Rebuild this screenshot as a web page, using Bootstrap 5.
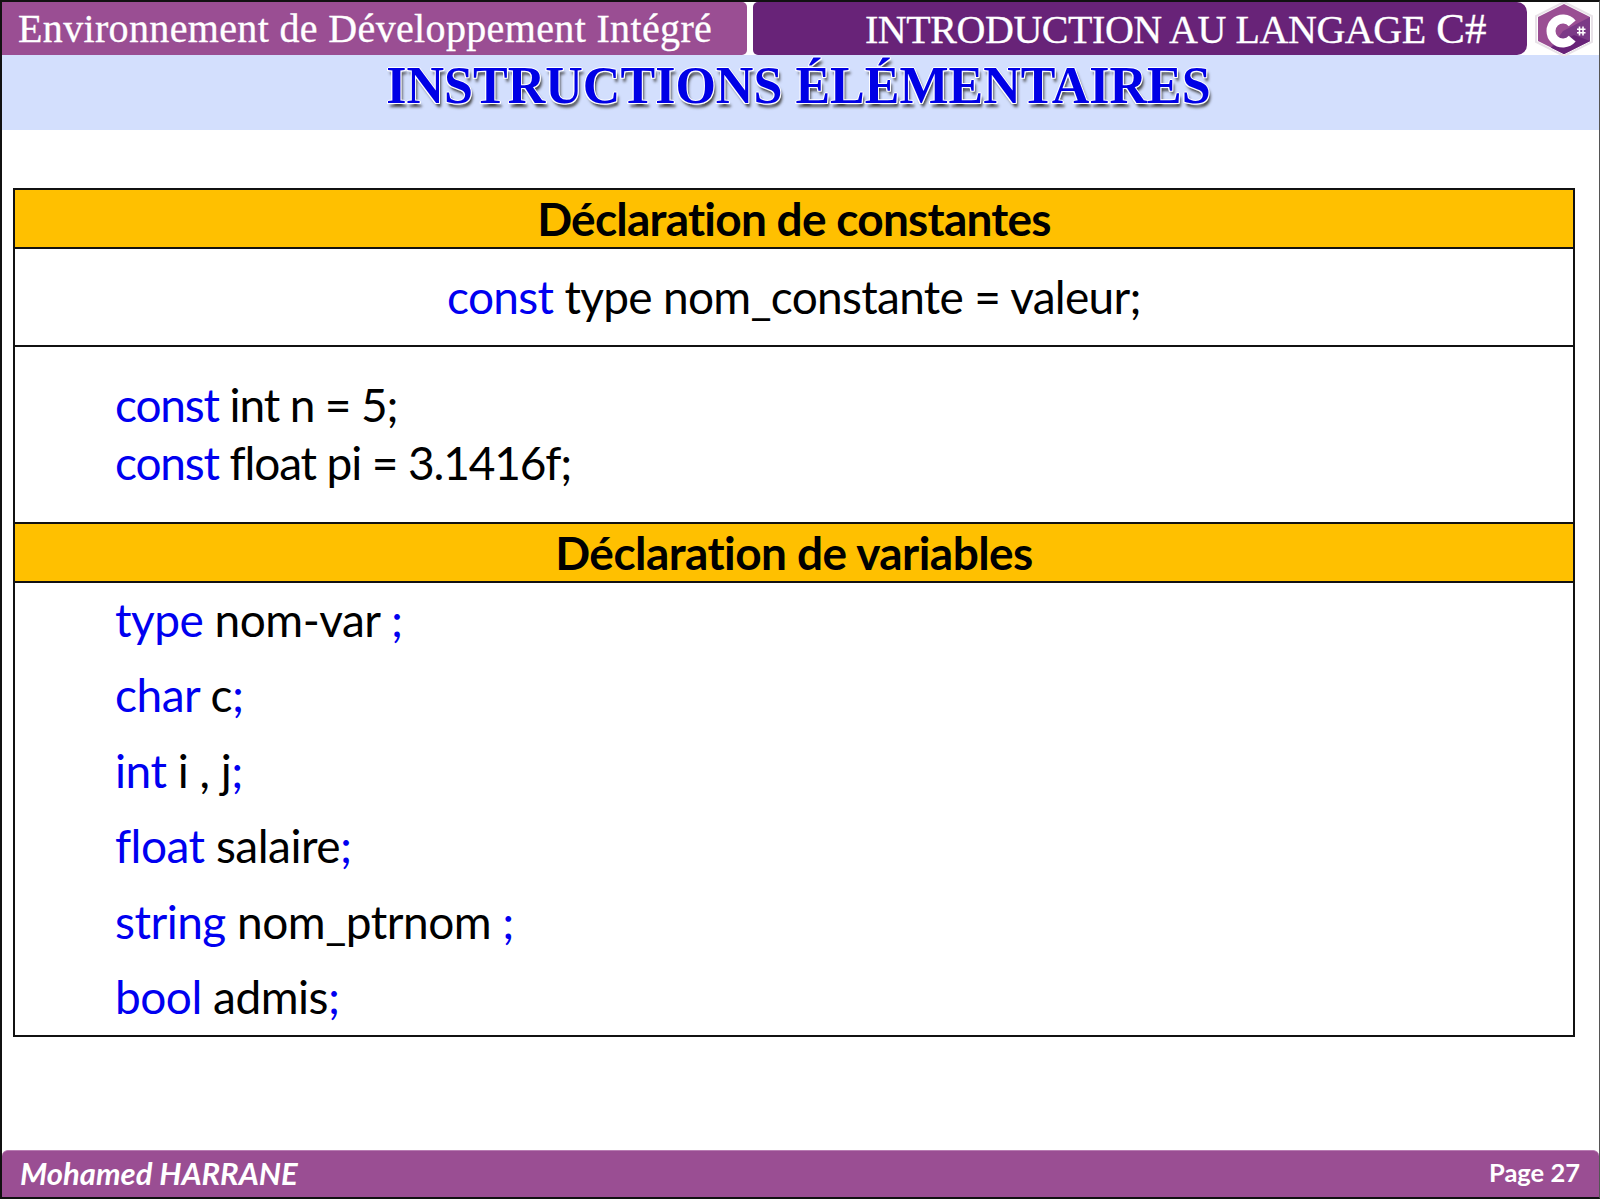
<!DOCTYPE html>
<html lang="fr">
<head>
<meta charset="utf-8">
<title>Instructions élémentaires</title>
<link href="https://cdn.jsdelivr.net/npm/bootstrap@5.3.0/dist/css/bootstrap.min.css" rel="stylesheet">
<style>
html,body{height:100%;margin:0}
body{background:#fff;font-family:"Lato","Liberation Sans",sans-serif;color:#000;overflow:hidden}
.slide{width:1600px;height:1199px;border-top:2px solid #111;border-left:2px solid #111;border-bottom:2px solid #111;border-right:1px solid #555;position:relative}
.topbar{height:53px}
.tab-left{width:746px;background:#9a4e93;border-radius:0 5px 5px 0;color:#fff;font-family:"Liberation Serif",serif;font-size:40px;padding-left:16px;line-height:54px;letter-spacing:.35px;white-space:nowrap;-webkit-text-stroke:.3px #fff}
.tab-sep{width:6px;background:#fff}
.tab-right{width:775px;background:#682378;border-radius:5px 10px 10px 5px;color:#fff;font-family:"Liberation Serif",serif;font-size:40px;line-height:54px;padding-left:112px;white-space:nowrap;letter-spacing:-.45px;-webkit-text-stroke:.3px #fff}
.tab-right b{font-weight:400;font-size:43px;letter-spacing:0;margin-left:1px}
.logo-box{width:72px}
.logo-box svg{margin-left:7px;display:block}
.band{height:75px;background:#d3dffd;text-align:center;font-family:"Liberation Serif",serif;font-weight:700;font-size:52px;line-height:62px;color:#0000e6;letter-spacing:.02px;padding-right:4px;text-shadow:1px 0 0 #fff,-1px 0 0 #fff,0 -1px 0 #fff,1px 1px 0 #fff,-1px 1px 0 #fff,2px 4px 3px #444}
.sheet{margin:58px 0 0 11px;width:1562px;border:2px solid #111;font-size:46px}
.head-row{height:59px;background:#ffc000;border-bottom:2px solid #111;text-align:center;font-weight:700;line-height:57px;letter-spacing:-.75px}
.syntax-row{height:98px;border-bottom:2px solid #111;text-align:center;line-height:95px;letter-spacing:-.7px}
.const-row{height:175px;padding:29px 0 0 100px;line-height:58px;letter-spacing:-1.15px}
.const-row + .head-row{border-top:2px solid #111;height:61px;line-height:58px;letter-spacing:-.55px}
.var-row{padding:0 0 0 100px;height:453px;line-height:75.4px;letter-spacing:-.5px}
.var-row > div:first-child{margin-top:-1px}
.kw{color:#0000f0}
.footer-bar{position:absolute;left:0;right:0;bottom:0;height:47px;background:#9a4e93;border-top:1px solid #b87cb2;border-radius:6px 6px 0 0;color:#fff;font-weight:700;padding:0 19px 0 18px;display:flex;justify-content:space-between}
.who{font-style:italic;font-size:31px;line-height:45px}
.pg{font-size:25.500px;line-height:43px}
</style>
</head>
<body>
<div class="slide">
  <div class="topbar d-flex">
    <div class="tab-left">Environnement de Développement Intégré</div>
    <div class="tab-sep"></div>
    <div class="tab-right">INTRODUCTION AU LANGAGE <b>C#</b></div>
    <div class="logo-box">
      <svg width="60" height="54" viewBox="0 0 60 54" aria-hidden="true">
        <path d="M30 0 58 14V40L30 54 2 40V14Z" fill="#fff" stroke="#e8e2e8" stroke-width="2"/>
        <path d="M30 2 56 15V39L30 52 4 39V15Z" fill="#9a4e93"/>
        <path d="M56 15V39L30 52 17 45.500 29 29Z" fill="#7b3a87"/>
        <path d="M56 39 30 52 17 45.500 40 33Z" fill="#682378"/>
        <path d="M38.200 36.700A12 12 0 1 1 38.200 21.300" fill="none" stroke="#fff" stroke-width="9"/>
        <path d="M45.500 24.500V33.500M49 24.500V33.500M43 27.300H51.500M43 30.700H51.500" stroke="#fff" stroke-width="1.600"/>
      </svg>
    </div>
  </div>
  <div class="band">INSTRUCTIONS ÉLÉMENTAIRES</div>
  <div class="sheet">
    <div class="head-row">Déclaration de constantes</div>
    <div class="syntax-row"><span class="kw">const</span> type nom_constante = valeur;</div>
    <div class="const-row">
      <div><span class="kw">const</span> int n = 5;</div>
      <div><span class="kw">const</span> float pi = 3.1416f;</div>
    </div>
    <div class="head-row">Déclaration de variables</div>
    <div class="var-row">
      <div><span class="kw">type</span> nom-var <span class="kw">;</span></div>
      <div><span class="kw">char</span> c<span class="kw">;</span></div>
      <div><span class="kw">int</span> i , j<span class="kw">;</span></div>
      <div><span class="kw">float</span> salaire<span class="kw">;</span></div>
      <div><span class="kw">string</span> nom_ptrnom <span class="kw">;</span></div>
      <div><span class="kw">bool</span> admis<span class="kw">;</span></div>
    </div>
  </div>
  <div class="footer-bar">
    <span class="who">Mohamed HARRANE</span>
    <span class="pg">Page 27</span>
  </div>
</div>
<script src="https://cdn.jsdelivr.net/npm/bootstrap@5.3.0/dist/js/bootstrap.bundle.min.js"></script>
</body>
</html>
